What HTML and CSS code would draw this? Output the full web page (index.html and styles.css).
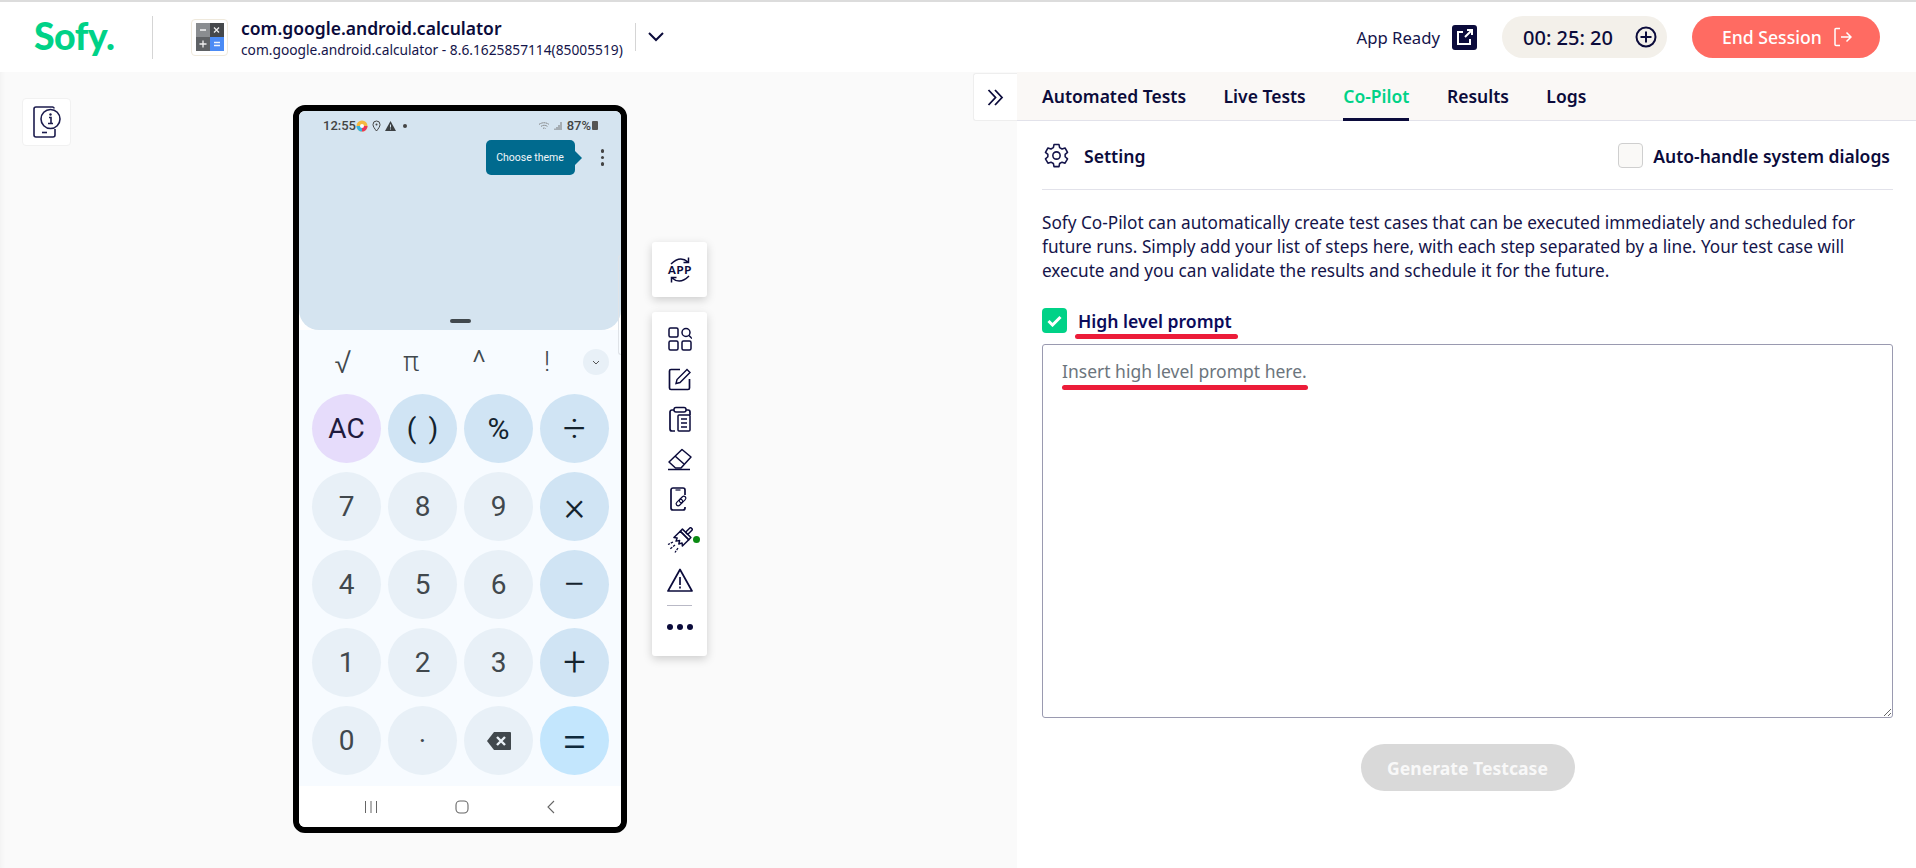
FILE: index.html
```html
<!DOCTYPE html>
<html lang="en">
<head>
<meta charset="utf-8">
<title>Sofy Co-Pilot</title>
<link rel="stylesheet" href="styles.css">
</head>
<body>
<header class="topbar">
  <div class="logo">Sofy.</div>
  <div class="logo-rule"></div>
  <div class="app-icon">
    <svg width="28" height="28" viewBox="0 0 28 28"><rect x="0" y="0" width="14" height="14" fill="#8a8d90"/><rect x="14" y="0" width="14" height="14" fill="#45484b"/><rect x="0" y="14" width="14" height="14" fill="#5f6265"/><rect x="14" y="14" width="14" height="14" fill="#4b8bf5"/><path d="M4 7h6M18 4.500l5 5M23 4.500l-5 5M7 17.500v7M3.500 21h7M18 19.500h6M18 22.500h6" stroke="#fff" stroke-width="1.300" fill="none" opacity=".9"/></svg>
  </div>
  <div class="app-meta">
    <div class="app-name">com.google.android.calculator</div>
    <div class="app-version">com.google.android.calculator - 8.6.1625857114(85005519)</div>
  </div>
  <div class="meta-rule"></div>
  <svg class="chevron" width="18" height="12" viewBox="0 0 18 12"><path d="M2 2l7 7 7-7" fill="none" stroke="#0b0b3b" stroke-width="2"/></svg>
  <div class="top-right">
    <span class="ready">App Ready</span>
    <span class="ext-icon"><svg width="25" height="25" viewBox="0 0 25 25"><rect width="25" height="25" rx="3" fill="#0b0b3b"/><path d="M11 7H6v12h12v-5M13 12l7-7M15 5h5v5" fill="none" stroke="#fff" stroke-width="2"/></svg></span>
    <div class="timer"><span>00: 25: 20</span><svg width="22" height="22" viewBox="0 0 22 22"><circle cx="11" cy="11" r="9.500" fill="none" stroke="#0b0b3b" stroke-width="2"/><path d="M11 5.500v11M5.500 11h11" stroke="#0b0b3b" stroke-width="2"/></svg></div>
    <div class="end-btn"><span>End Session</span><svg width="18" height="20" viewBox="0 0 18 20"><path d="M6 1.500H2a1 1 0 0 0-1 1v15a1 1 0 0 0 1 1h4M7 10h10M12.500 5.500L17 10l-4.500 4.500" fill="none" stroke="#fff" stroke-width="1.500"/></svg></div>
  </div>
</header>

<main class="workspace">
  <section class="stage">
    <div class="info-card">
      <svg width="30" height="32" viewBox="0 0 30 32"><path d="M22 2.500V2a1.500 1.500 0 0 0-1.500-1H4A2 2 0 0 0 2 3v26a2 2 0 0 0 2 2h17a2 2 0 0 0 2-2v-6" fill="none" stroke="#1c1c4e" stroke-width="1.600"/><circle cx="18.500" cy="13" r="9.500" fill="#fff" stroke="#1c1c4e" stroke-width="1.600"/><path d="M17 11.500h2v6M16 17.500h5" fill="none" stroke="#1c1c4e" stroke-width="1.600"/><circle cx="18.500" cy="8.500" r="1.200" fill="#1c1c4e"/><path d="M10 26.500h5" stroke="#1c1c4e" stroke-width="1.600"/></svg>
    </div>

    <div class="phone">
      <div class="display">
        <div class="status">
          <span class="clock">12:55</span>
          <svg class="st-app" width="12" height="12" viewBox="0 0 12 12"><circle cx="6" cy="6" r="5.500" fill="#f5b942"/><path d="M6 6L11.500 6A5.500 5.500 0 0 1 6 11.500z" fill="#e8365d"/><path d="M6 6V11.500A5.500 5.500 0 0 1 .5 6z" fill="#35b3e0"/><circle cx="6" cy="6" r="2" fill="#fff"/></svg>
          <svg class="st-pin" width="9" height="12" viewBox="0 0 9 12"><path d="M4.500 11C2.500 8.500 1 6.500 1 4.500a3.500 3.500 0 0 1 7 0C8 6.500 6.500 8.500 4.500 11z" fill="none" stroke="#444" stroke-width="1"/><circle cx="4.500" cy="4.500" r="1" fill="#444"/></svg>
          <svg class="st-warn" width="11" height="10" viewBox="0 0 11 10"><path d="M5.500 0L11 10H0z" fill="#3c4043"/><path d="M5.500 3.500v3M5.500 7.500v1" stroke="#d5e4f0" stroke-width="1"/></svg>
          <span class="st-dot"></span>
          <span class="st-spacer"></span>
          <svg class="st-wifi" width="13" height="10" viewBox="0 0 13 10"><path d="M1 3.500a8 8 0 0 1 10 0M3 5.500a5 5 0 0 1 6.500 0M5 7.500a2 2 0 0 1 2.500 0" fill="none" stroke="#777" stroke-width="1" stroke-dasharray="1.300 .5"/></svg>
          <svg class="st-signal" width="9" height="10" viewBox="0 0 9 10"><path d="M1 9V7.500M3 9V6M5 9V4M7 9V1" stroke="#777" stroke-width="1"/></svg>
          <span class="batt-text">87%</span>
          <span class="battery"></span>
        </div>
        <div class="hint-row">
          <div class="hint">Choose theme</div>
          <div class="kebab"><i></i><i></i><i></i></div>
        </div>
        <div class="grip"></div>
      </div>
      <div class="keypad">
        <div class="sci">
          <span class="sci-key sci-root">√</span><span class="sci-key">π</span><span class="sci-key sci-caret">^</span><span class="sci-key">!</span>
          <span class="sci-more"><svg width="8" height="5" viewBox="0 0 8 5"><path d="M1 1l3 3 3-3" fill="none" stroke="#555" stroke-width="1"/></svg></span>
        </div>
        <div class="keys">
          <div class="key key-ac">AC</div>
          <div class="key key-op key-paren">( )</div>
          <div class="key key-op key-pct">%</div>
          <div class="key key-op">÷</div>
          <div class="key">7</div>
          <div class="key">8</div>
          <div class="key">9</div>
          <div class="key key-op">×</div>
          <div class="key">4</div>
          <div class="key">5</div>
          <div class="key">6</div>
          <div class="key key-op">−</div>
          <div class="key">1</div>
          <div class="key">2</div>
          <div class="key">3</div>
          <div class="key key-op">+</div>
          <div class="key">0</div>
          <div class="key">·</div>
          <div class="key"><svg width="24" height="18" viewBox="0 0 24 18"><path d="M7 0h16a1 1 0 0 1 1 1v16a1 1 0 0 1-1 1H7L0 9z" fill="#41484d"/><path d="M10 5l8 8M18 5l-8 8" stroke="#eaf1f7" stroke-width="2.400"/></svg></div>
          <div class="key key-op key-eq">=</div>
        </div>
      </div>
      <div class="navbar">
        <svg width="14" height="14" viewBox="0 0 14 14"><path d="M1.500 1v12M7 1v12M12.500 1v12" stroke="#666" stroke-width="1"/></svg>
        <svg width="14" height="14" viewBox="0 0 14 14"><rect x="1" y="1" width="12" height="12" rx="4" fill="none" stroke="#666" stroke-width="1.100"/></svg>
        <svg width="10" height="14" viewBox="0 0 10 14"><path d="M8 1L2 7l6 6" fill="none" stroke="#666" stroke-width="1.100"/></svg>
      </div>
      <div class="scroll-hint"></div>
    </div>

    <div class="tools">
      <div class="tool-card tool-app">
        <svg width="28" height="28" viewBox="0 0 28 28"><path d="M5 8Q14 -1 22 6M22.500 1.500v5h-5M23 20Q14 29 6 22M5.500 26.500v-5h5" fill="none" stroke="#0b0b3b" stroke-width="1.500"/><text class="app-text" x="14" y="18" text-anchor="middle">APP</text></svg>
      </div>
      <div class="tool-card tool-list">
        <svg width="24" height="24" viewBox="0 0 24 24"><g fill="none" stroke="#0b0b3b" stroke-width="1.500"><rect x="1" y="1" width="9" height="9" rx="1.500"/><rect x="1" y="14" width="9" height="9" rx="1.500"/><rect x="14" y="14" width="9" height="9" rx="1.500"/><circle cx="18" cy="5.500" r="4"/><path d="M21 8.500l3 3"/></g></svg>
        <svg width="24" height="24" viewBox="0 0 24 24"><path d="M12 2.500H3a1.500 1.500 0 0 0-1.500 1.500v17A1.500 1.500 0 0 0 3 22.500h17a1.500 1.500 0 0 0 1.500-1.500V12" fill="none" stroke="#0b0b3b" stroke-width="1.700"/><path d="M8 16.500l1-4L19 2.500l3 3L12 15.500z" fill="none" stroke="#0b0b3b" stroke-width="1.400"/></svg>
        <svg width="22" height="26" viewBox="0 0 22 26"><path d="M5 4H3a2 2 0 0 0-2 2v17a2 2 0 0 0 2 2h3M17 4h2a2 2 0 0 1 2 2v3" fill="none" stroke="#0b0b3b" stroke-width="1.700"/><rect x="5" y="1.500" width="12" height="4.500" rx="2" fill="none" stroke="#0b0b3b" stroke-width="1.500"/><rect x="9" y="9" width="12" height="16" rx="1" fill="none" stroke="#0b0b3b" stroke-width="1.500"/><path d="M12 13h6M12 17h6M12 21h6" stroke="#0b0b3b" stroke-width="1.500"/></svg>
        <svg width="26" height="24" viewBox="0 0 26 24"><path d="M1 21.500h22" stroke="#0b0b3b" stroke-width="1.500"/><path d="M15 1.500l9 7.500-10 11H8.500L2 14z" fill="none" stroke="#0b0b3b" stroke-width="1.500" stroke-linejoin="round"/><path d="M8 8l9 8" stroke="#0b0b3b" stroke-width="1.500"/></svg>
        <svg width="20" height="24" viewBox="0 0 20 24"><path d="M15 8V3a2 2 0 0 0-2-2H3a2 2 0 0 0-2 2v18a2 2 0 0 0 2 2h10a2 2 0 0 0 2-2v-1" fill="none" stroke="#0b0b3b" stroke-width="1.700"/><path d="M5.500 3h5" stroke="#0b0b3b" stroke-width="1.200"/><g transform="rotate(-45 11 14)" fill="none" stroke="#0b0b3b" stroke-width="1.200"><rect x="5" y="12" width="7.500" height="4" rx="2"/><rect x="9.500" y="12" width="7.500" height="4" rx="2"/></g></svg>
        <span class="brush-wrap">
          <svg width="26" height="26" viewBox="0 0 26 26"><g transform="rotate(45 14 12)" fill="none" stroke="#0b0b3b" stroke-width="1.500" stroke-linejoin="round"><rect x="12.500" y="-3" width="3" height="7" rx="1"/><path d="M8 4h12v3H8z"/><path d="M8 7h12v9l-2.500-2-1.500 3-2-3-2 3-1.500-3L8 16z"/></g><path d="M6 15l-5 2.500M8 18l-5 4M11 21l-3 4.500" stroke="#0b0b3b" stroke-width="1.300" stroke-dasharray="2.500 1"/></svg>
          <i class="brush-dot"></i>
        </span>
        <svg width="26" height="24" viewBox="0 0 26 24"><path d="M13 1.500L25 23H1z" fill="none" stroke="#0b0b3b" stroke-width="1.700" stroke-linejoin="round"/><path d="M13 9v8M13 18.500v2" stroke="#0b0b3b" stroke-width="1.700"/></svg>
        <div class="tool-rule"></div>
        <div class="tool-more"><i></i><i></i><i></i></div>
      </div>
    </div>
    <div class="collapse"><svg width="17" height="17" viewBox="0 0 17 17"><path d="M1.500 1l7 7.500-7 7.500M8 1l7 7.500-7 7.500" fill="none" stroke="#0b0b3b" stroke-width="1.800"/></svg></div>
  </section>

  <section class="panel">
    <nav class="tabs">
      <a class="tab">Automated Tests</a>
      <a class="tab">Live Tests</a>
      <a class="tab tab-active">Co-Pilot</a>
      <a class="tab">Results</a>
      <a class="tab">Logs</a>
    </nav>
    <div class="panel-body">
      <div class="setting-row">
        <svg width="25" height="25" viewBox="0 0 24 24"><path d="M9.600 1.500h4.800l.6 3 2.300 1.300 2.900-1 2.400 4.200-2.300 2v2.200l2.300 2-2.400 4.200-2.900-1-2.300 1.300-.6 3H9.600l-.6-3-2.300-1.300-2.900 1-2.400-4.200 2.300-2V11l-2.300-2 2.400-4.200 2.900 1L9 4.500z" fill="none" stroke="#14144a" stroke-width="1.500" stroke-linejoin="round"/><circle cx="12" cy="12" r="3.500" fill="none" stroke="#14144a" stroke-width="1.500"/></svg>
        <span class="setting-label">Setting</span>
        <span class="st-spacer"></span>
        <span class="check-empty"></span>
        <span class="auto-label">Auto-handle system dialogs</span>
      </div>
      <p class="intro">Sofy Co-Pilot can automatically create test cases that can be executed immediately and scheduled for future runs. Simply add your list of steps here, with each step separated by a line. Your test case will execute and you can validate the results and schedule it for the future.</p>
      <div class="prompt-row">
        <span class="check-on"><svg width="15" height="12" viewBox="0 0 15 12"><path d="M1.500 6l4 4 8-8" fill="none" stroke="#fff" stroke-width="3"/></svg></span>
        <span class="prompt-label">High level prompt<i class="mark mark-label"></i></span>
      </div>
      <div class="prompt-box">
        <textarea class="prompt-input" placeholder="Insert high level prompt here."></textarea>
        <i class="mark mark-hint"></i>
      </div>
      <div class="actions"><button class="generate" type="button">Generate Testcase</button></div>
    </div>
  </section>
</main>
</body>
</html>
```
FILE: styles.css
```css
* { box-sizing: border-box; }
html, body { margin: 0; padding: 0; height: 868px; overflow: hidden; }
body { font-family: "Noto Sans", "Open Sans", sans-serif; color: #0b0b3b; background: #fff; }

.topbar { height: 72px; border-top: 2px solid #dcdcdc; background: #fff; display: flex; align-items: center; padding-left: 34px; }
.logo { font-family: Lato, sans-serif; font-weight: 900; font-size: 37.500px; line-height: 40px; color: #00d287; width: 81px; letter-spacing: -.5px; margin-top: -2px; }
.logo-rule { width: 1px; height: 43px; background: #d5d5d5; margin-left: 37px; }
.app-icon { width: 37px; height: 37px; margin-left: 38px; border: 1px solid #efe9dc; border-radius: 4px; display: flex; align-items: center; justify-content: center; }
.app-meta { margin-left: 13px; width: 381px; }
.app-name { font-size: 17.500px; font-weight: 600; line-height: 24px; white-space: nowrap; }
.app-version { font-size: 13.750px; line-height: 19px; white-space: nowrap; color: #14144a; }
.meta-rule { width: 1px; height: 28px; background: #d5d5d5; margin-left: 13px; }
.chevron { margin-left: 11px; }
.top-right { margin-left: auto; display: flex; align-items: center; padding-right: 36px; }
.ready { font-size: 16.700px; color: #14144a; white-space: nowrap; }
.ext-icon { display: flex; margin-left: 12px; }
.timer { width: 165px; height: 42px; border-radius: 21px; background: #f3f0ea; margin-left: 25px; display: flex; align-items: center; padding-left: 21px; gap: 22px; font-size: 20px; font-weight: 500; white-space: nowrap; }
.end-btn { width: 188px; height: 42px; border-radius: 21px; background: #ff6b62; margin-left: 25px; display: flex; align-items: center; padding-left: 30px; gap: 12px; color: #fff; font-size: 17.600px; font-weight: 500; white-space: nowrap; }

.workspace { display: flex; height: 796px; }
.stage { position: relative; width: 1017px; background: #fafafa; display: flex; align-items: flex-start; padding: 26px 0 0 22px; box-shadow: inset 6px 0 6px -6px rgba(0,0,0,.06); }
.info-card { width: 49px; height: 48px; background: #fff; border-radius: 4px; border: 1px solid #f1f1f1; display: flex; align-items: center; justify-content: center; }
.collapse { position: absolute; top: 1px; right: 0; width: 44px; height: 48px; background: #fff; border: 1px solid #eeeeee; border-right: 0; border-radius: 3px 0 0 3px; display: flex; align-items: center; justify-content: center; }

.phone { position: relative; width: 334px; height: 728px; margin: 7px 0 0 222px; border: 6px solid #000; border-radius: 12px; background: #fff; overflow: hidden; display: flex; flex-direction: column; font-family: Roboto, sans-serif; }
.display { height: 219px; background: #d5e4f0; border-radius: 0 0 20px 20px; position: relative; flex: none; z-index: 1; }
.status { height: 28px; display: flex; align-items: center; padding: 1px 23px 0 24px; color: #444; font-size: 13px; font-weight: 500; }
.clock { width: 33px; }
.st-pin { margin-left: 4px; }
.st-warn { margin-left: 4px; }
.st-dot { width: 4px; height: 4px; border-radius: 50%; background: #444; margin-left: 7px; }
.st-spacer { flex: 1; }
.st-signal { margin-left: 3px; }
.batt-text { margin-left: 4px; }
.battery { width: 6px; height: 9px; background: #555; border-radius: 1px; margin-left: 1px; }
.hint-row { display: flex; align-items: center; justify-content: flex-end; padding-right: 17px; height: 35px; margin-top: 1px; }
.hint { position: relative; width: 89px; height: 35px; background: #006a8e; color: #f1f6f9; border-radius: 5px; font-size: 10.500px; display: flex; align-items: center; justify-content: center; margin-right: 26px; }
.hint::after { content: ""; position: absolute; left: 100%; top: 11px; border-left: 7px solid #006a8e; border-top: 7px solid transparent; border-bottom: 7px solid transparent; }
.kebab { display: flex; flex-direction: column; gap: 3px; }
.kebab i { width: 3.500px; height: 3.500px; border-radius: 50%; background: #444; display: block; }
.grip { position: absolute; left: 151px; bottom: 7px; width: 21px; height: 4px; border-radius: 2px; background: #41484d; }
.keypad { flex: 1; background: #f7fbff; padding-left: 13px; }
.sci { height: 64px; display: flex; align-items: center; color: #41484d; font-size: 27px; position: relative; }
.sci-key { width: 68px; text-align: center; font-weight: 300; position: relative; left: -3px; }
.sci-root { font-size: 32px; }
.sci-caret { font-size: 34px; }
.sci-more { width: 26px; height: 26px; border-radius: 50%; background: #e8f0f7; display: flex; align-items: center; justify-content: center; margin-left: -1px; }
.keys { display: grid; grid-template-columns: repeat(4, 69px); grid-auto-rows: 69px; column-gap: 7px; row-gap: 9px; }
.key { border-radius: 50%; background: #e8f0f7; color: #41484d; font-size: 28px; font-weight: 400; display: flex; align-items: center; justify-content: center; }
.key-op { background: #d0e4f4; color: #14232e; font-size: 40px; font-weight: 300; }
.key-paren { font-size: 28px; font-weight: 400; word-spacing: 5px; }
.key-pct { font-size: 30px; font-weight: 400; }
.key-ac { background: #e6dcfb; color: #1f1a3d; }
.key-eq { background: #c3e6fd; color: #0e2a3d; font-size: 46px; }
.navbar { height: 41px; background: #fff; display: flex; align-items: center; justify-content: center; gap: 77px; flex: none; }
.scroll-hint { position: absolute; right: -3px; top: 144px; width: 6px; height: 100px; border: 1px solid #dfe3e8; border-right: 0; border-radius: 3px 0 0 3px; z-index: 2; }

.tools { display: flex; flex-direction: column; gap: 15px; margin: 144px 0 0 25px; }
.tool-card { width: 55px; background: #fff; border-radius: 3px; box-shadow: 0 3px 10px rgba(0,0,0,.18); display: flex; flex-direction: column; align-items: center; }
.tool-app { height: 55px; justify-content: center; }
.app-text { font-family: Lato, "Noto Sans", sans-serif; font-size: 11px; font-weight: 900; letter-spacing: .8px; fill: #0b0b3b; }
.tool-list { height: 344px; padding-top: 15px; gap: 15.500px; }
.brush-wrap { position: relative; display: flex; }
.brush-dot { position: absolute; left: 26px; top: 9px; width: 7px; height: 7px; border-radius: 50%; background: #0a8a12; }
.tool-rule { width: 25px; height: 1px; background: #b9b9c6; margin-top: -3px; }
.tool-more { display: flex; gap: 4px; margin-top: 3px; }
.tool-more i { width: 6px; height: 6px; border-radius: 50%; background: #0b0b3b; display: block; }

.panel { flex: 1; display: flex; flex-direction: column; background: #fff; min-width: 0; }
.tabs { height: 49px; flex: none; background: #faf8f6; border-bottom: 1px solid #e2e2ea; display: flex; gap: 37.500px; padding-left: 25px; }
.tab { height: 49px; display: flex; align-items: center; font-size: 17.500px; font-weight: 600; padding-bottom: 1px; white-space: nowrap; color: #0b0b3b; }
.tab-active { color: #00d287; border-bottom: 3px solid #0b0b3b; padding-bottom: 0; padding-top: 1px; }
.panel-body { padding: 0 23px 0 25px; }
.setting-row { height: 69px; border-bottom: 1px solid #e2e2ea; display: flex; align-items: center; padding: 1px 3px 0 2px; }
.setting-label { margin-left: 15px; font-size: 17.600px; font-weight: 600; }
.check-empty { width: 25px; height: 25px; border: 1px solid #cfcfcf; border-radius: 4px; background: #faf9f7; }
.auto-label { margin-left: 10px; font-size: 17.500px; font-weight: 600; white-space: nowrap; }
.intro { margin: 21px 0 0; font-size: 17.200px; line-height: 24px; color: #14144a; }
.prompt-row { display: flex; align-items: center; height: 25px; margin-top: 25px; }
.check-on { width: 25px; height: 25px; border-radius: 4px; background: #00d287; display: flex; align-items: center; justify-content: center; }
.prompt-label { position: relative; margin-left: 11px; font-size: 17.600px; font-weight: 600; color: #0b0b5b; white-space: nowrap; }
.mark { position: absolute; display: block; height: 5px; border-radius: 3px; background: #ec1c39; }
.mark-label { left: -3px; right: -6px; top: 25px; }
.prompt-box { position: relative; height: 374px; margin-top: 11px; }
.prompt-input { display: block; width: 100%; height: 100%; border: 1px solid #9a9ab0; border-radius: 3px; padding: 14px 19px; font-family: "Noto Sans", sans-serif; font-size: 17.500px; line-height: 24px; background: #fff; outline: 0; }
.prompt-input::placeholder { color: #6c757d; opacity: 1; }
.mark-hint { left: 20px; width: 246px; top: 41px; }
.actions { display: flex; justify-content: center; margin-top: 26px; }
.generate { width: 214px; height: 47px; border: 0; border-radius: 24px; background: #d9d9d9; color: #f8f8f8; font-family: "Noto Sans", sans-serif; font-size: 17.600px; font-weight: 700; }
```
